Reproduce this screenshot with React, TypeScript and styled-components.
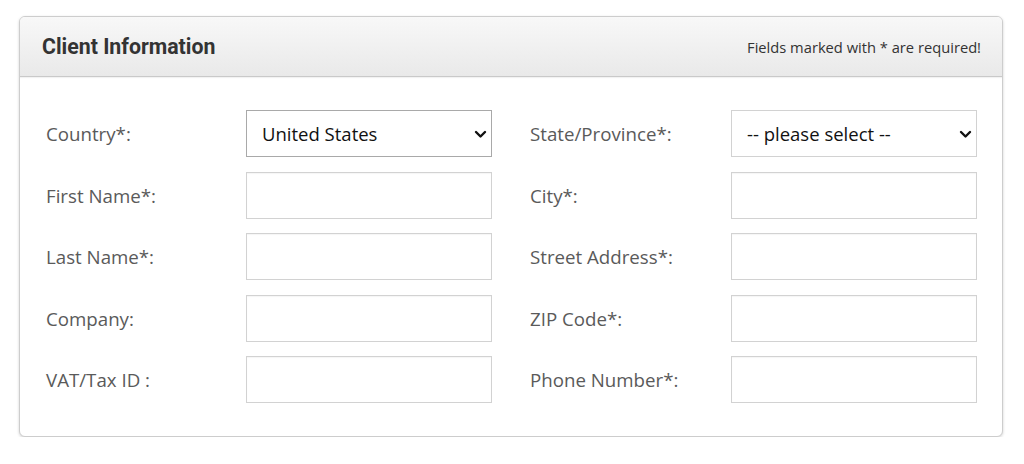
import React, { useState } from "react";
import styled, { createGlobalStyle } from "styled-components";

const GlobalStyle = createGlobalStyle`
  html, body {
    margin: 0;
    padding: 0;
    background: #ffffff;
  }
  body {
    font-family: "Open Sans", "Liberation Sans", sans-serif;
  }
`;

const Page = styled.div`
  padding: 16px 0 0 19px;
`;

const Panel = styled.section`
  width: 984px;
  box-sizing: border-box;
  border: 1px solid #cdcdcd;
  border-radius: 6px;
  background: #fff;
  box-shadow: 0 1px 3px rgba(0, 0, 0, 0.18);
  overflow: hidden;
`;

const PanelHeader = styled.header`
  height: 59px;
  display: flex;
  align-items: center;
  justify-content: space-between;
  padding: 0 21px 0 22px;
  background: linear-gradient(to bottom, #f8f8f8 0%, #e9e9e9 100%);
  border-bottom: 1px solid #c9c9c9;
  box-shadow: 0 1px 1px rgba(0, 0, 0, 0.05);
`;

const Title = styled.h2`
  margin: 0;
  font-family: Roboto, "Liberation Sans", sans-serif;
  font-weight: 700;
  font-size: 21.3px;
  color: #333;
`;

const Note = styled.span`
  font-size: 14.7px;
  color: #333;
`;

const PanelBody = styled.div`
  display: grid;
  grid-template-columns: 446px 447px;
  column-gap: 38px;
  padding: 33px 25px 33px 26px;
`;

const FieldColumn = styled.div<{ $labelWidth: number }>`
  display: grid;
  grid-template-columns: ${(p) => p.$labelWidth}px 246px;
  grid-auto-rows: 47px;
  row-gap: 14.5px;
  align-items: center;
`;

const Label = styled.label`
  font-size: 18.7px;
  color: #5a5a5a;
`;

const TextInput = styled.input`
  width: 100%;
  height: 47px;
  box-sizing: border-box;
  border: 1px solid #d2d2d2;
  box-shadow: inset 0 1px 1px rgba(0, 0, 0, 0.04);
  padding: 0 15px;
  font-family: "Open Sans", "Liberation Sans", sans-serif;
  font-size: 18.5px;
  color: #111;
  outline: none;
`;

const SelectWrap = styled.div`
  position: relative;
  height: 47px;
`;

const Select = styled.select<{ $strong?: boolean }>`
  appearance: none;
  -webkit-appearance: none;
  width: 100%;
  height: 47px;
  box-sizing: border-box;
  border: 1px solid ${(p) => (p.$strong ? "#a9a9a9" : "#d2d2d2")};
  border-radius: 0;
  background: #fff;
  padding: 0 30px 0 15px;
  font-family: "Open Sans", "Liberation Sans", sans-serif;
  font-size: 18.5px;
  color: #111;
  outline: none;
`;

const Chevron = styled.svg`
  position: absolute;
  right: 5px;
  top: 50%;
  width: 13px;
  height: 9px;
  margin-top: -4px;
  pointer-events: none;
`;

const ChevronIcon = () => (
  <Chevron viewBox="0 0 13 9">
    <path d="M2 2 L6.5 6.5 L11 2" fill="none" stroke="#111" strokeWidth="2.4" strokeLinecap="round" strokeLinejoin="round" />
  </Chevron>
);

interface FieldProps {
  id: string;
  label: string;
}

const Field: React.FC<FieldProps> = ({ id, label }) => {
  const [value, setValue] = useState("");
  return (
    <>
      <Label htmlFor={id}>{label}</Label>
      <TextInput id={id} type="text" value={value} onChange={(e) => setValue(e.target.value)} />
    </>
  );
};

const App: React.FC = () => {
  const [country, setCountry] = useState("US");
  const [state, setState] = useState("");

  return (
    <Page>
      <GlobalStyle />
      <Panel>
        <PanelHeader>
          <Title>Client Information</Title>
          <Note>Fields marked with * are required!</Note>
        </PanelHeader>
        <PanelBody>
          <FieldColumn $labelWidth={200}>
            <Label htmlFor="country">Country*:</Label>
            <SelectWrap>
              <Select $strong id="country" value={country} onChange={(e) => setCountry(e.target.value)}>
                <option value="US">United States</option>
                <option value="CA">Canada</option>
                <option value="GB">United Kingdom</option>
              </Select>
              <ChevronIcon />
            </SelectWrap>
            <Field id="first" label="First Name*:" />
            <Field id="last" label="Last Name*:" />
            <Field id="company" label="Company:" />
            <Field id="vat" label="VAT/Tax ID :" />
          </FieldColumn>
          <FieldColumn $labelWidth={201}>
            <Label htmlFor="state">State/Province*:</Label>
            <SelectWrap>
              <Select id="state" value={state} onChange={(e) => setState(e.target.value)}>
                <option value="">-- please select --</option>
                <option value="CA">California</option>
                <option value="NY">New York</option>
              </Select>
              <ChevronIcon />
            </SelectWrap>
            <Field id="city" label="City*:" />
            <Field id="street" label="Street Address*:" />
            <Field id="zip" label="ZIP Code*:" />
            <Field id="phone" label="Phone Number*:" />
          </FieldColumn>
        </PanelBody>
      </Panel>
    </Page>
  );
};

export default App;
